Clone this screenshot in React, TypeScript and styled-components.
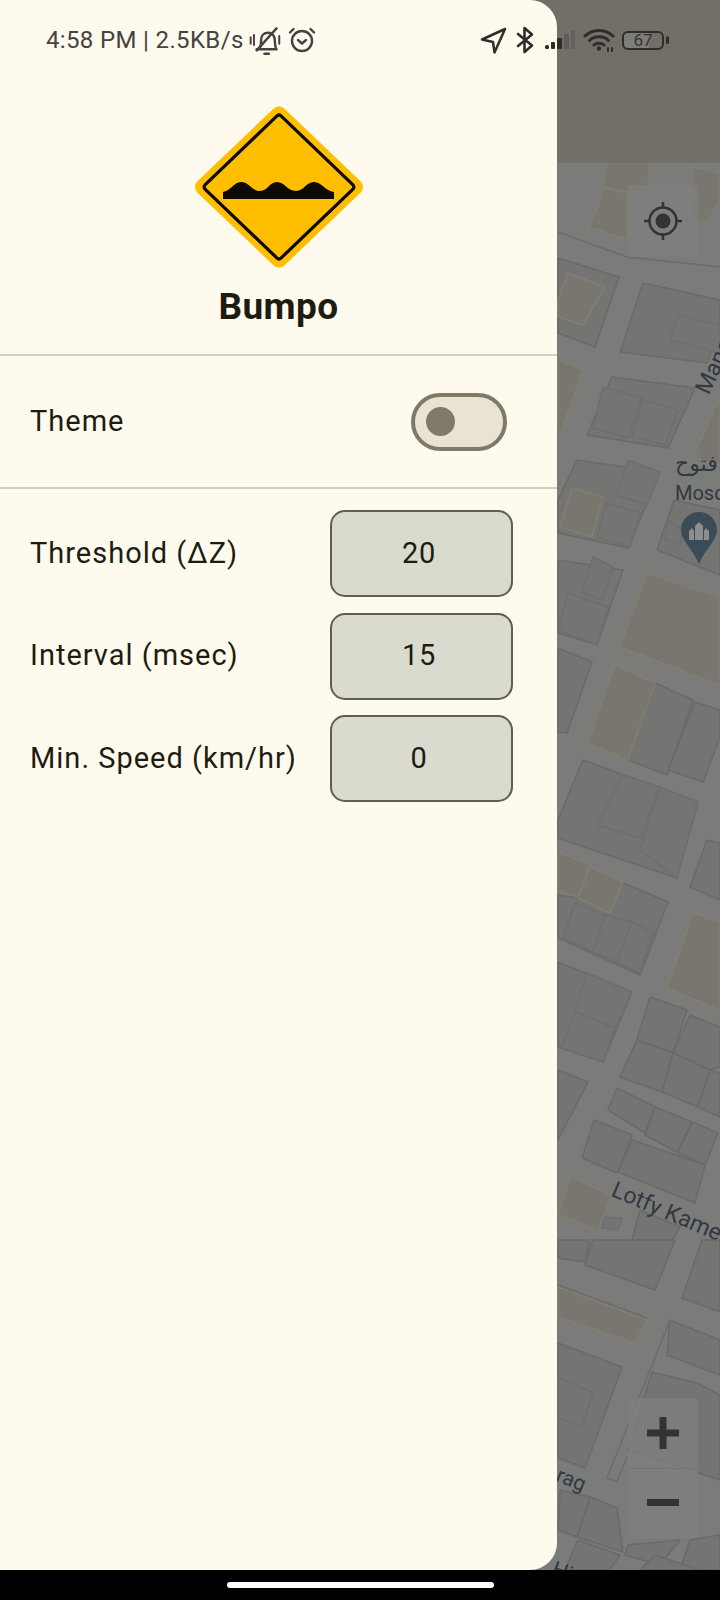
import React from "react";
import styled, { createGlobalStyle } from "styled-components";

const Global = createGlobalStyle`
  html, body { margin: 0; padding: 0; background: #000; }
  body { width: 720px; height: 1600px; overflow: hidden; font-family: Roboto, "Liberation Sans", sans-serif; }
`;

const Screen = styled.div`
  position: relative;
  width: 720px;
  height: 1600px;
  display: flex;
  flex-direction: column;
  background: #000;
  overflow: hidden;
`;
const Stage = styled.div`
  flex: 0 0 1570px;
  display: flex;
  background: #7b7b7a;
`;
const Drawer = styled.aside`
  position: relative;
  z-index: 2;
  flex: 0 0 557px;
  margin-right: -30px;
  display: flex;
  flex-direction: column;
  background: #fffaee;
  border-radius: 0 27px 27px 0;
  color: #1e1c10;
`;
const Brand = styled.header`
  height: 354px;
  box-sizing: border-box;
  padding-top: 105px;
  display: flex;
  flex-direction: column;
  align-items: center;
`;
const BrandName = styled.h1`
  margin: 16px 0 0;
  font: 700 37px/44px Roboto, sans-serif;
  letter-spacing: 0.4px;
`;
const Divider = styled.hr`
  margin: 0;
  border: 0;
  height: 2px;
  background: #d2cfc2;
`;
const ThemeRow = styled.div`
  height: 131px;
  display: flex;
  align-items: center;
  justify-content: space-between;
  padding: 0 50px 0 30px;
`;
const Label = styled.span`
  padding-bottom: 2px;
  font: 400 29px/36px Roboto, sans-serif;
  letter-spacing: 1px;
`;
const Toggle = styled.div`
  width: 96px;
  height: 58px;
  box-sizing: border-box;
  display: flex;
  align-items: center;
  padding-left: 11px;
  border: 4px solid #7f7a68;
  border-radius: 29px;
  background: #e8e3d3;
`;
const Knob = styled.span`
  width: 29px;
  height: 29px;
  border-radius: 50%;
  background: #7f7a68;
`;
const Settings = styled.div`
  display: flex;
  flex-direction: column;
  gap: 15.5px;
  padding-top: 21px;
`;
const SettingRow = styled.div`
  display: flex;
  align-items: center;
  justify-content: space-between;
  padding: 0 44px 0 30px;
`;
const ValueBox = styled.div`
  width: 183px;
  height: 87px;
  box-sizing: border-box;
  display: flex;
  align-items: center;
  justify-content: center;
  padding: 0 5px 2px 0;
  border: 2px solid #5f5e50;
  border-radius: 15px;
  background: #d9dbcf;
  font: 400 29px/36px Roboto, sans-serif;
  letter-spacing: 0.8px;
`;
const MapPane = styled.main`
  position: relative;
  flex: 1;
  overflow: hidden;
`;
const MapSvg = styled.svg`
  display: block;
  width: 193px;
  height: 1570px;
`;
const MapLabel = styled.span<{ $x: number; $y: number; $size: number; $rot?: number }>`
  position: absolute;
  left: ${p => p.$x - 527}px;
  top: ${p => p.$y}px;
  font: 400 ${p => p.$size}px/1 Roboto, "DejaVu Sans", sans-serif;
  color: #2f3942;
  white-space: nowrap;
  transform: rotate(${p => p.$rot ?? 0}deg);
  transform-origin: 0 50%;
`;
const MapControl = styled.div<{ $y: number; $h: number }>`
  position: absolute;
  left: 101px;
  top: ${p => p.$y}px;
  width: 70px;
  height: ${p => p.$h}px;
  display: flex;
  flex-direction: column;
  background: rgba(128, 128, 127, 0.72);
  border-radius: 2px;
`;
const ControlCell = styled.div`
  flex: 1;
  display: flex;
  align-items: center;
  justify-content: center;
  & + & { border-top: 1px solid #757575; }
`;
const NavBar = styled.footer`
  flex: 1;
  display: flex;
  justify-content: center;
  padding-top: 12px;
  background: #000;
`;
const NavPill = styled.span`
  width: 267px;
  height: 6px;
  border-radius: 3px;
  background: #fff;
`;
const StatusBar = styled.div`
  position: absolute;
  z-index: 3;
  left: 46px;
  top: 25px;
  width: 624px;
  height: 30px;
  display: flex;
  align-items: center;
  color: #444340;
`;
const Clock = styled.span`
  font: 400 24px/30px Roboto, sans-serif;
  letter-spacing: 0.35px;
  white-space: nowrap;
`;
const StatusLeft = styled.div`
  display: flex;
  align-items: center;
  gap: 5px;
`;
const StatusRight = styled.div`
  margin-left: auto;
  display: flex;
  align-items: center;
  gap: 7px;
`;
const Battery = styled.div`
  position: relative;
  width: 42px;
  height: 19px;
  box-sizing: border-box;
  margin-right: 6px;
  border: 2.5px solid #2e2d2a;
  border-radius: 6px;
  display: flex;
  align-items: center;
  justify-content: center;
  font: 400 17px/1 Roboto, sans-serif;
  color: #35332f;
  background: linear-gradient(90deg, #7f7d77 67%, transparent 67%);
  &::after {
    content: "";
    position: absolute;
    right: -7px;
    top: 3px;
    width: 3px;
    height: 8px;
    border-radius: 2px;
    background: #2e2d2a;
  }
`;

type P = number[];
const plain: P[] = [
  [620,352,707,363,720,330,720,300,643,283,620,353],
  [558,258,619,277,595,347,558,333],
  [612,377,695,388,668,448,587,435],
  [577,460,660,472,628,548,558,533,558,500],
  [674,500,657,550,720,575,720,510],
  [558,560,623,570,597,645,558,633],
  [558,648,592,662,567,733,558,732],
  [655,683,693,700,667,775,628,760],
  [695,702,720,710,720,737,703,782,668,770],
  [583,760,698,802,677,878,593,850,558,838,558,820],
  [690,887,707,840,720,843,720,900],
  [623,883,668,902,640,975,558,938,558,895,578,898],
  [558,962,632,992,603,1062,558,1047],
  [650,997,687,1010,673,1053,637,1040],
  [637,1040,673,1053,662,1092,620,1077],
  [690,1015,720,1027,720,1067,710,1070,673,1053],
  [673,1053,710,1070,698,1107,662,1092],
  [710,1070,720,1073,720,1117,698,1107],
  [558,1070,588,1082,558,1140],
  [617,1088,655,1107,645,1133,608,1110],
  [655,1107,692,1122,677,1152,645,1135],
  [692,1122,718,1133,705,1165,678,1153],
  [594,1120,632,1135,617,1173,582,1158],
  [632,1140,705,1165,695,1203,618,1172],
  [640,1210,680,1227,672,1240,632,1240],
  [558,1240,590,1240,585,1262,558,1258],
  [593,1240,675,1240,655,1290,585,1265],
  [702,1240,720,1240,720,1312,682,1298],
  [558,1343,622,1367,585,1468,558,1458],
  [670,1320,720,1340,720,1375,667,1355],
  [652,1372,697,1383,720,1395,720,1480,628,1450],
  [590,1497,617,1508,623,1552,577,1537],
  [560,1490,590,1497,577,1537,558,1530],
  [628,1545,680,1540,660,1565,625,1555],
  [690,1540,720,1535,720,1570,680,1570],
  [578,1540,620,1555,610,1570,565,1570],
  [655,1555,700,1570,640,1570],
];
const inner: P[] = [
  [678,315,720,325,720,353,670,340],
  [603,387,642,398,628,438,593,428],
  [643,400,678,410,665,445,632,437],
  [628,460,660,472,647,505,617,495],
  [607,503,640,513,630,547,597,537],
  [668,520,683,530,680,543,665,540],
  [593,557,613,567,602,600,582,593],
  [568,593,608,607,597,645,558,630],
  [575,903,605,915,593,952,563,938],
  [605,915,632,922,617,962,593,952],
  [632,922,653,932,640,973,617,962],
  [587,973,632,992,615,1028,575,1012],
  [575,1012,615,1028,603,1062,562,1048],
  [603,1217,622,1218,618,1230,602,1228],
  [558,1377,593,1393,582,1427,558,1417],
  [623,775,660,787,640,838,598,825],
  [660,787,698,802,677,878,640,850],
];
const yellow: P[] = [
  [607,163,650,163,647,195,602,187],
  [602,188,627,193,627,239,588,227,597,210],
  [693,167,720,173,720,200,707,223,690,220],
  [568,273,605,287,583,325,558,317,558,300],
  [558,360,583,370,562,430,558,428],
  [693,457,720,397,720,465],
  [572,488,603,497,592,537,560,527],
  [647,573,720,597,720,685,620,647],
  [615,665,655,683,628,760,588,743],
  [558,852,590,865,578,897,558,890],
  [590,867,623,882,610,913,578,898],
  [693,913,720,922,720,1010,667,988],
  [570,1177,612,1195,598,1230,558,1215],
  [558,1287,647,1320,635,1343,558,1317],
];
const pts = (p: P) => p.reduce<string[]>((a, v, i) => (i % 2 ? [...a.slice(0, -1), a[a.length - 1] + "," + v] : [...a, String(v)]), []).join(" ");

const Shape = styled.polygon<{ $kind: "plain" | "inner" | "yellow" }>`
  fill: ${p => (p.$kind === "yellow" ? "#78766e" : "#747473")};
  stroke: ${p => (p.$kind === "yellow" ? "#817f72" : p.$kind === "inner" ? "#6e6e6d" : "#6a6a69")};
  stroke-width: 1.6;
  stroke-linejoin: round;
`;
const Street = styled.path`
  fill: none;
  stroke: #6c6c6b;
  stroke-width: 1.6;
`;

const MapArt = () => (
  <MapSvg viewBox="527 0 193 1570" aria-hidden>
    <Street d="M558 232L627 257L720 267" />
    {plain.map((p, i) => <Shape key={"p" + i} $kind="plain" points={pts(p)} />)}
    {inner.map((p, i) => <Shape key={"i" + i} $kind="inner" points={pts(p)} />)}
    {yellow.map((p, i) => <Shape key={"y" + i} $kind="yellow" points={pts(p)} />)}
    <rect x="527" y="0" width="193" height="163" fill="#726f69" />
    <Street d="M558 1285L647 1318M670 1320L607 1478L617 1482L627 1457" />
    <path d="M699 512a18 18 0 0 1 18 18c0 10-11 18-18 34c-7-16-18-24-18-34a18 18 0 0 1 18-18z" fill="#3b4b57" />
    <path d="M689 540v-9l3-3 2 3v9zM695 540v-14l4-4 4 4v14zM704 540v-9l2-3 3 3v9z" fill="#8d8f8f" />
  </MapSvg>
);

const Sign = () => (
  <svg width="170" height="164" viewBox="0 0 170 164" aria-hidden>
    <polygon points="85,9.500 161,82 85,154.500 9,82" fill="#ffbe00" stroke="#ffbe00" strokeWidth="16" strokeLinejoin="round" />
    <polygon points="85,13 157,82 85,151 13,82" fill="#0c0a04" stroke="#0c0a04" strokeWidth="9" strokeLinejoin="round" />
    <polygon points="85,13 157,82 85,151 13,82" fill="#ffbe00" stroke="#ffbe00" strokeWidth="2.500" strokeLinejoin="round" />
    <path d="M29 94V87C37 86 40 76 48 77C56 78 58 86 66 86C74 86 75 77 83 77C91 77 93 86 102 86C110 86 112 77 120 77C128 77 131 86 140 87V94Z" fill="#0c0a04" />
  </svg>
);

const Muted = () => (
  <svg width="33" height="33" viewBox="0 0 30 30" fill="none" stroke="#444340" strokeWidth="2.200" strokeLinecap="round" strokeLinejoin="round" aria-hidden>
    <path d="M7 23h18M9 23c2-2 2-5 2-8c0-4 2-7 6-7c3 0 5 1.500 6 4c1 3 0 8 2 11" />
    <path d="M14 27h4M25 4L7 24" />
    <path d="M1.500 12v6M4.500 10v9M27.500 11v7" strokeWidth="1.800" />
  </svg>
);
const Alarm = () => (
  <svg width="30" height="30" viewBox="0 0 30 30" fill="none" stroke="#444340" strokeWidth="2.400" strokeLinecap="round" strokeLinejoin="round" aria-hidden>
    <circle cx="15" cy="16" r="10" />
    <path d="M3 7.500L6.500 4M27 7.500L23.500 4M11 15l4 3.500l4-3.500" />
  </svg>
);
const Arrow = () => (
  <svg width="28" height="28" viewBox="0 0 28 28" fill="none" stroke="#2e2d2a" strokeWidth="2.500" strokeLinejoin="round" aria-hidden>
    <path d="M25 3L2 13.500L13 16L14.500 26.500Z" />
  </svg>
);
const Bluetooth = () => (
  <svg width="22" height="28" viewBox="0 0 22 28" fill="none" stroke="#2e2d2a" strokeWidth="2.600" strokeLinejoin="round" strokeLinecap="round" aria-hidden>
    <path d="M3 8L17 19.500L9.500 26V2L17 8.500L3 20" />
  </svg>
);
const Signal = () => (
  <svg width="32" height="22" viewBox="0 0 32 22" aria-hidden>
    <rect x="1" y="16" width="4" height="4" rx="1.500" fill="#2e2d2a" />
    <rect x="7" y="13" width="4" height="7" rx="1" fill="#2e2d2a" />
    <rect x="13" y="9" width="5" height="11" rx="1" fill="#2e2d2a" />
    <rect x="20" y="5" width="5" height="15" rx="1" fill="#555" opacity=".7" />
    <rect x="27" y="1" width="4" height="19" rx="1" fill="#555" opacity=".55" />
  </svg>
);
const Wifi = () => (
  <svg width="32" height="26" viewBox="0 0 32 26" fill="none" stroke="#2e2d2a" strokeWidth="3" strokeLinecap="round" aria-hidden>
    <path d="M2 9C9.500 1.500 22.500 1.500 30 9M6.500 13.500C11.500 8.500 20.500 8.500 25.500 13.500M11 18C13.500 15.500 18.500 15.500 21 18" />
    <circle cx="16" cy="21.500" r="2.200" fill="#2e2d2a" stroke="none" />
    <path d="M25 24v-3M29 24v-3" strokeWidth="2" />
  </svg>
);
const Locate = () => (
  <svg width="40" height="40" viewBox="0 0 40 40" fill="none" stroke="#333" strokeWidth="2.500" aria-hidden>
    <circle cx="20" cy="20" r="13.500" />
    <circle cx="20" cy="20" r="7.500" fill="#333" stroke="none" />
    <path d="M20 1v6M20 33v6M1 20h6M33 20h6" />
  </svg>
);
const Plus = () => (
  <svg width="32" height="32" viewBox="0 0 32 32" aria-hidden>
    <path d="M12.500 0h7v12.500H32v7H19.500V32h-7V19.500H0v-7h12.500z" fill="#333" />
  </svg>
);
const Minus = () => (
  <svg width="32" height="8" viewBox="0 0 32 8" aria-hidden>
    <rect width="32" height="7" fill="#333" />
  </svg>
);

const settings = [
  { label: "Threshold (ΔZ)", value: "20" },
  { label: "Interval (msec)", value: "15" },
  { label: "Min. Speed (km/hr)", value: "0" },
];

export default function App() {
  return (
    <>
      <Global />
      <Screen>
        <Stage>
          <Drawer>
            <Brand>
              <Sign />
              <BrandName>Bumpo</BrandName>
            </Brand>
            <Divider />
            <ThemeRow>
              <Label>Theme</Label>
              <Toggle><Knob /></Toggle>
            </ThemeRow>
            <Divider />
            <Settings>
              {settings.map(s => (
                <SettingRow key={s.label}>
                  <Label>{s.label}</Label>
                  <ValueBox>{s.value}</ValueBox>
                </SettingRow>
              ))}
            </Settings>
          </Drawer>
          <MapPane>
            <MapArt />
            <MapLabel $x={675} $y={453} $size={22}>فتوح</MapLabel>
            <MapLabel $x={675} $y={483} $size={20}>Mosque</MapLabel>
            <MapLabel $x={702} $y={381} $size={23} $rot={-65}>Mansour</MapLabel>
            <MapLabel $x={613} $y={1177} $size={23} $rot={23}>Lotfy Kamel</MapLabel>
            <MapLabel $x={535} $y={1455} $size={21} $rot={22}>Sarag</MapLabel>
            <MapLabel $x={553} $y={1558} $size={21} $rot={20}>Hi</MapLabel>
            <MapControl $y={185} $h={72}><ControlCell><Locate /></ControlCell></MapControl>
            <MapControl $y={1398} $h={140}>
              <ControlCell><Plus /></ControlCell>
              <ControlCell><Minus /></ControlCell>
            </MapControl>
          </MapPane>
        </Stage>
        <NavBar><NavPill /></NavBar>
        <StatusBar>
          <StatusLeft>
            <Clock>4:58 PM | 2.5KB/s</Clock>
            <Muted />
            <Alarm />
          </StatusLeft>
          <StatusRight>
            <Arrow />
            <Bluetooth />
            <Signal />
            <Wifi />
            <Battery>67</Battery>
          </StatusRight>
        </StatusBar>
      </Screen>
    </>
  );
}
